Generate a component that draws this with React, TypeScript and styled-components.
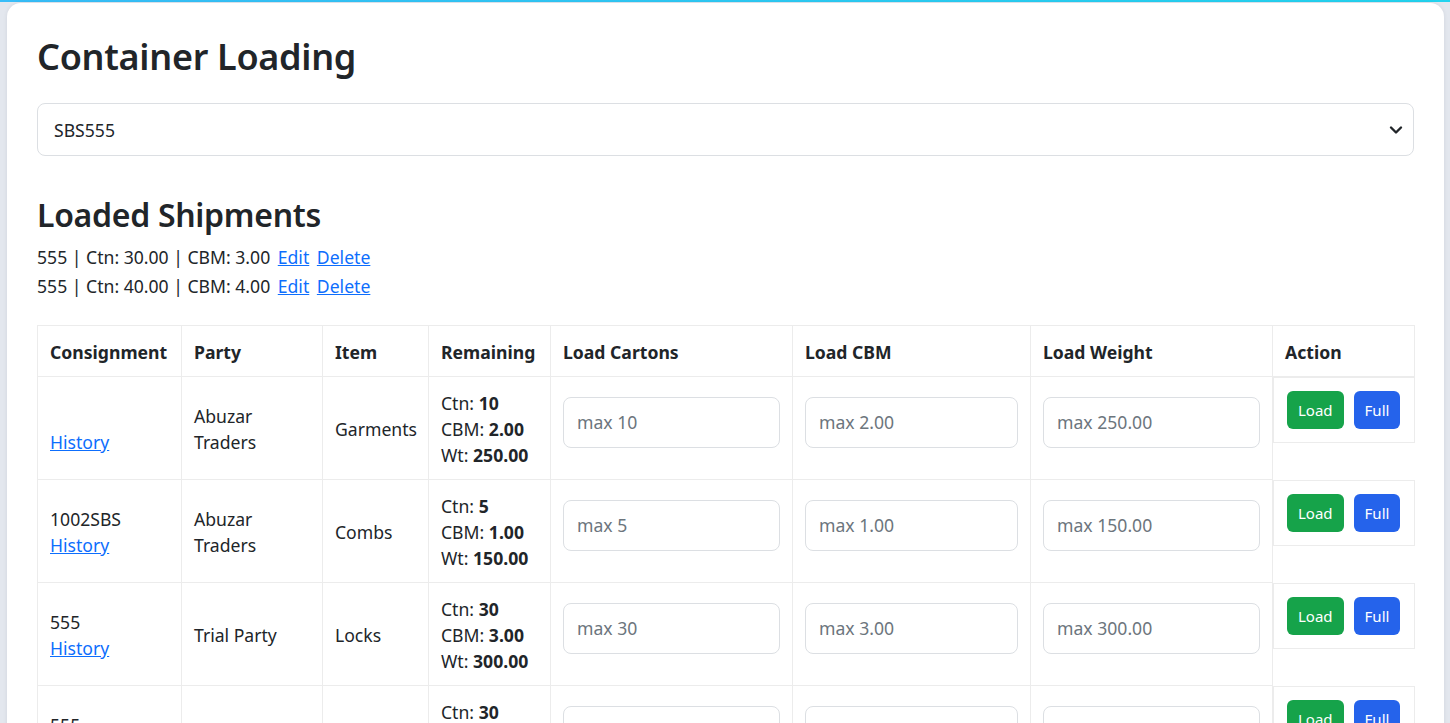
import React from "react";
import styled, { createGlobalStyle } from "styled-components";

const Global = createGlobalStyle`
  html, body { margin: 0; padding: 0; }
  body {
    background: #e3e7ee;
    font-family: "Noto Sans", "Open Sans", Arial, sans-serif;
    color: #212529;
    font-size: 17.6px;
    overflow: hidden;
  }
  * { box-sizing: border-box; }
`;

const TopStrip = styled.div`
  height: 2px;
  background: linear-gradient(90deg, #38bdf8, #22d3ee);
`;

const Page = styled.div`
  padding: 1px 6px 0 7px;
`;

const Card = styled.main`
  background: #ffffff;
  border-radius: 14px 14px 0 0;
  padding: 30px 30px 30px 30px;
  min-height: 900px;
  box-shadow: 0 0 4px rgba(15, 23, 42, 0.08);
`;

const Title = styled.h1`
  margin: 0 0 22px;
  font-size: 36px;
  line-height: 48px;
  font-weight: 600;
  letter-spacing: -0.3px;
`;

const SelectWrap = styled.div`
  position: relative;
`;

const Select = styled.select`
  width: 100%;
  height: 53px;
  appearance: none;
  border: 1px solid #dcdfe3;
  border-radius: 8px;
  background: #fff;
  padding: 0 40px 0 16px;
  font-family: inherit;
  font-size: 17.6px;
  color: #212529;
`;

const Chevron = styled.svg`
  position: absolute;
  right: 11px;
  top: 50%;
  transform: translateY(-50%);
  pointer-events: none;
`;

const Subtitle = styled.h2`
  margin: 38px 0 7px;
  font-size: 32px;
  line-height: 42px;
  font-weight: 600;
  letter-spacing: -0.3px;
`;

const ShipLine = styled.div`
  line-height: 29px;
  font-size: 17.6px;
`;

const Link = styled.a<{ $gap?: number }>`
  color: #0d6efd;
  text-decoration: underline;
  cursor: pointer;
  margin-left: ${(p) => p.$gap ?? 0}px;
`;

const Table = styled.table`
  margin-top: 24px;
  width: 100%;
  border-collapse: collapse;
  table-layout: fixed;
`;

const Th = styled.th`
  text-align: left;
  font-weight: 700;
  border: 1px solid #ececec;
  padding: 13px 12px 11px;
  line-height: 26px;
  font-size: 17.6px;
  white-space: nowrap;
`;

const Td = styled.td`
  border: 1px solid #ececec;
  padding: 13px 12px 11px;
  line-height: 26px;
  vertical-align: middle;
`;

const InputCell = styled.td`
  border: 1px solid #ececec;
  padding: 12px 12px;
  vertical-align: middle;
`;

const Input = styled.input`
  display: block;
  width: 100%;
  height: 51px;
  margin-bottom: 12px;
  border: 1px solid #dcdfe3;
  border-radius: 8px;
  padding: 0 13px;
  font-family: inherit;
  font-size: 17.6px;
  color: #212529;
  &::placeholder { color: #6c757d; }
`;

const ActionCell = styled.td`
  display: flex;
  gap: 10px;
  border: 1px solid #ececec;
  padding: 13px;
`;

const Btn = styled.button<{ $kind: "load" | "full" }>`
  height: 38px;
  border: none;
  border-radius: 6px;
  padding: 0 11px;
  font-family: inherit;
  font-size: 15px;
  color: #fff;
  background: ${(p) => (p.$kind === "load" ? "#16a34a" : "#2563eb")};
`;

type Row = {
  cons: string;
  party: string;
  item: string;
  ctn: string;
  cbm: string;
  wt: string;
};

const rows: Row[] = [
  { cons: "", party: "Abuzar Traders", item: "Garments", ctn: "10", cbm: "2.00", wt: "250.00" },
  { cons: "1002SBS", party: "Abuzar Traders", item: "Combs", ctn: "5", cbm: "1.00", wt: "150.00" },
  { cons: "555", party: "Trial Party", item: "Locks", ctn: "30", cbm: "3.00", wt: "300.00" },
  { cons: "555", party: "Trial Party", item: "Locks", ctn: "30", cbm: "3.00", wt: "300.00" },
];

const widths = [144, 141, 106, 122, 242, 238, 242, 142];

export default function App() {
  return (
    <>
      <Global />
      <TopStrip />
      <Page>
        <Card>
          <Title>Container Loading</Title>
          <SelectWrap>
            <Select defaultValue="SBS555">
              <option>SBS555</option>
            </Select>
            <Chevron width="14" height="10" viewBox="0 0 14 10">
              <path d="M2 2.5 L7 7.5 L12 2.5" fill="none" stroke="#212529" strokeWidth="2.4" strokeLinecap="round" strokeLinejoin="round" />
            </Chevron>
          </SelectWrap>
          <Subtitle>Loaded Shipments</Subtitle>
          <ShipLine>
            555 | Ctn: 30.00 | CBM: 3.00 <Link $gap={3}>Edit</Link> <Link $gap={3}>Delete</Link>
          </ShipLine>
          <ShipLine>
            555 | Ctn: 40.00 | CBM: 4.00 <Link $gap={3}>Edit</Link> <Link $gap={3}>Delete</Link>
          </ShipLine>
          <Table>
            <colgroup>
              {widths.map((w, i) => (
                <col key={i} style={{ width: w }} />
              ))}
            </colgroup>
            <thead>
              <tr>
                <Th>Consignment</Th>
                <Th>Party</Th>
                <Th>Item</Th>
                <Th>Remaining</Th>
                <Th>Load Cartons</Th>
                <Th>Load CBM</Th>
                <Th>Load Weight</Th>
                <Th>Action</Th>
              </tr>
            </thead>
            <tbody>
              {rows.map((r, i) => (
                <tr key={i}>
                  <Td>
                    {r.cons}
                    <br />
                    <Link>History</Link>
                  </Td>
                  <Td>{r.party}</Td>
                  <Td>{r.item}</Td>
                  <Td>
                    Ctn: <b>{r.ctn}</b>
                    <br />
                    CBM: <b>{r.cbm}</b>
                    <br />
                    Wt: <b>{r.wt}</b>
                  </Td>
                  <InputCell>
                    <Input placeholder={`max ${r.ctn}`} />
                  </InputCell>
                  <InputCell>
                    <Input placeholder={`max ${r.cbm}`} />
                  </InputCell>
                  <InputCell>
                    <Input placeholder={`max ${r.wt}`} />
                  </InputCell>
                  <ActionCell>
                    <Btn $kind="load">Load</Btn>
                    <Btn $kind="full">Full</Btn>
                  </ActionCell>
                </tr>
              ))}
            </tbody>
          </Table>
        </Card>
      </Page>
    </>
  );
}
